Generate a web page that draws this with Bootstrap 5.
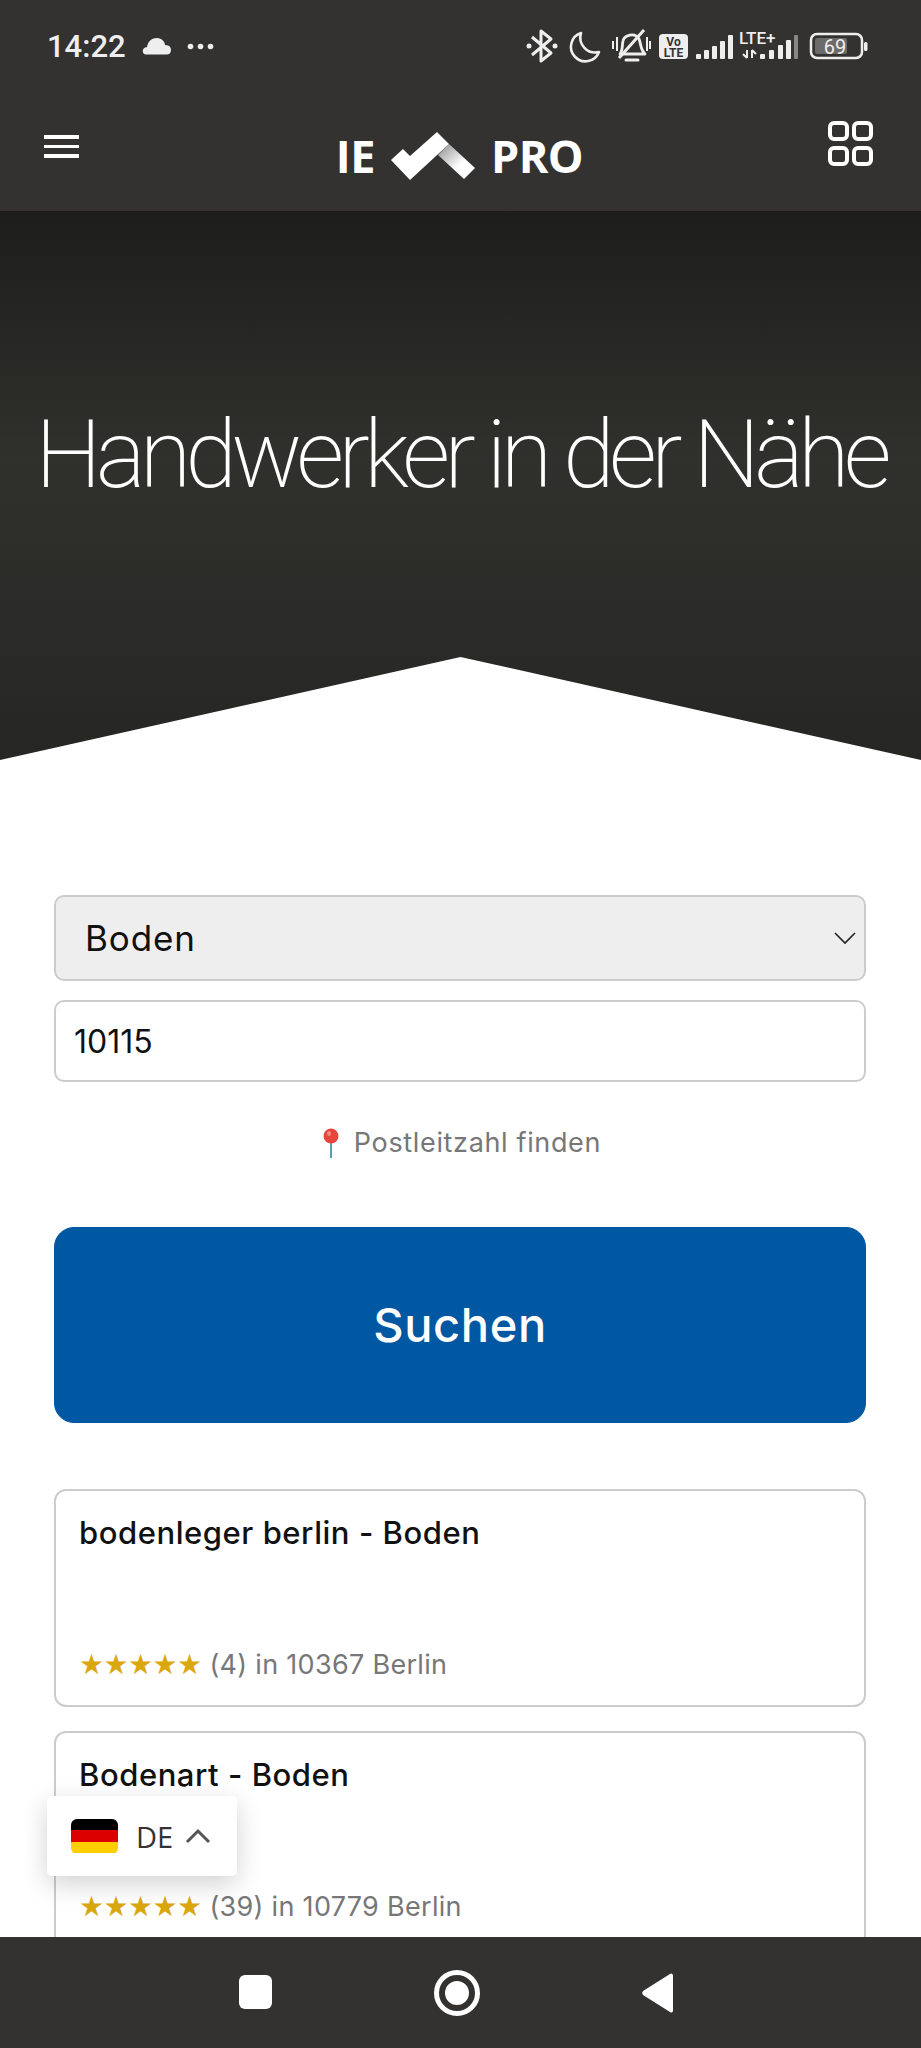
<!DOCTYPE html>
<html lang="de">
<head>
    <meta charset="UTF-8">
    <meta name="viewport" content="width=device-width, initial-scale=1.0">
    <title>Handwerker in der Nähe</title>
    <link href="https://cdn.jsdelivr.net/npm/bootstrap@5.3.3/dist/css/bootstrap.min.css" rel="stylesheet">
    <script src="https://cdn.jsdelivr.net/npm/bootstrap@5.3.3/dist/js/bootstrap.bundle.min.js"></script>
    <style>
        body { font-family: "Inter", "Noto Sans", sans-serif; background: #fff; }
        .phone { width: 921px; height: 2048px; overflow: hidden; position: relative; }

        /* top bars */
        .top-bar { background: #333231; height: 211px; }
        .status-row { height: 92px; padding: 0 53px 0 47px; color: #eee; }
        .clock { font: 500 31px/1 "Roboto", sans-serif; margin-right: 16px; }
        .nav-row { height: 119px; padding: 0 48px 0 44px; }
        .logo-wrap { margin: 8px 0 0 12px; }
        .logo-text { font: 700 45px/1 "Open Sans", sans-serif; letter-spacing: -.5px; color: #fff; }
        .menu-btn { width: 35px; margin-top: 43px; }
        .menu-btn span { display: block; height: 3.5px; background: #fff; margin-bottom: 6px; }

        /* hero */
        .hero-band {
            height: 549px;
            background: linear-gradient(180deg, #1d1d1c 0%, #30302c 45%, #262625 100%);
            clip-path: polygon(0 0, 100% 0, 100% 100%, 50% 446px, 0 100%);
            padding-top: 188px;
        }
        .hero-band h1 {
            font: 200 94px/1.2 "Roboto", sans-serif;
            letter-spacing: -5.9px;
            color: #fff;
            white-space: nowrap;
        }

        /* search form */
        .search-area { padding: 135px 55px 0 54px; flex: 1 1 auto; min-height: 0; overflow: hidden; }
        .search-area .form-select {
            height: 86px; font-size: 35px; letter-spacing: .9px; padding-left: 29px; color: #111;
            background-color: #eee; border: 2px solid #ccc; border-radius: 10px;
            background-image: url("data:image/svg+xml,%3csvg xmlns='http://www.w3.org/2000/svg' viewBox='0 0 22 14'%3e%3cpath fill='none' stroke='%23222' stroke-width='1.6' d='M1 2l10 10L21 2'/%3e%3c/svg%3e");
            background-size: 22px 14px; background-position: right 8px center;
        }
        .search-area .form-control {
            height: 82px; font-size: 32px; padding-left: 18px; color: #111;
            border: 2px solid #ccc; border-radius: 10px; margin-top: 19px;
        }
        .plz-link { font-size: 27px; letter-spacing: .65px; color: #777; margin-top: 42px; line-height: 38px; }
        .plz-link span { margin-left: 3px; }
        .search-btn {
            height: 196px; width: 100%; margin-top: 65px; font-size: 47px; letter-spacing: .6px; font-weight: 500;
            background: #0058a3; border-color: #0058a3; border-radius: 20px; color: #fff;
        }
        .result-box { height: 218px; border: 2px solid #ccc; border-radius: 12px; margin-bottom: 24px; padding: 22px 23px 0; }
        .first-box { margin-top: 66px; }
        .result-title { font-size: 31px; letter-spacing: .55px; line-height: 40px; font-weight: 500; color: #111; }
        .result-meta { font-size: 27px; letter-spacing: .3px; line-height: 36px; color: #777; margin-top: 94px; }
        .gold-stars { color: #dba70f; font-family: "DejaVu Sans", sans-serif; font-size: 28px; letter-spacing: -.6px; }

        /* language switcher */
        .lang-box {
            position: absolute; left: 47px; top: 1796px; width: 190px; height: 80px;
            background: #fff; border-radius: 5px; box-shadow: 0 8px 26px rgba(0,0,0,.18);
            padding-left: 24px;
        }
        .lang-code { font: 400 29px/1 "Open Sans", sans-serif; color: #333; margin: 0 12px 0 18px; }
        .flag { width: 47px; height: 35px; border-radius: 6px; overflow: hidden; }
        .flag i { display: block; height: 33.34%; }

        /* android nav */
        .bottom-bar { height: 111px; background: #333231; flex: 0 0 auto; }
    </style>
</head>
<body>
<div class="phone d-flex flex-column">

    <div class="top-bar flex-shrink-0">
        <div class="status-row d-flex align-items-center">
            <span class="clock">14:22</span>
            <svg width="29" height="18" viewBox="0 0 29 18"><path d="M4 17.500C0 17.500-1 11 5 10c1-6 5-9 10-9s8 4 8 7c5 0 6 3 6 5 0 3-2 4.500-4 4.500z" fill="#eee"/></svg>
            <svg class="ms-3" width="27" height="7" viewBox="0 0 27 7"><circle cx="3.500" cy="3.500" r="2.800" fill="#eee"/><circle cx="13.500" cy="3.500" r="2.800" fill="#eee"/><circle cx="23.500" cy="3.500" r="2.800" fill="#eee"/></svg>
            <svg class="ms-auto" width="342" height="40" viewBox="526 26 342 40">
                <!-- bluetooth -->
                <path d="M532 37 551 53 541 61V31l10 8-19 16" fill="none" stroke="#eee" stroke-width="3" stroke-linejoin="round"/>
                <circle cx="529" cy="46" r="2.500" fill="#eee"/><circle cx="555" cy="46" r="2.500" fill="#eee"/>
                <!-- moon -->
                <path d="M581 33a14.500 14.500 0 1 0 18 19 15 15 0 0 1-18-19z" fill="none" stroke="#eee" stroke-width="2.600" stroke-linejoin="round"/>
                <!-- muted bell -->
                <path d="M620 54c3-4 2-9 3-13 1-6 12-9 16-2 2 4 1 10 6 15z" fill="none" stroke="#eee" stroke-width="2.800" stroke-linejoin="round"/>
                <path d="M619 58 644 30" stroke="#eee" stroke-width="3"/>
                <path d="M626 60h12" stroke="#eee" stroke-width="3" stroke-linecap="round"/>
                <path d="M613 41v8M617 37v14M647 37v14M650 41v8" stroke="#eee" stroke-width="2"/>
                <!-- volte -->
                <rect x="659" y="34" width="29" height="25" rx="4" fill="#eee"/>
                <text x="673.500" y="45.500" text-anchor="middle" font-family="Roboto" font-weight="700" font-size="12" fill="#333">Vo</text>
                <text x="673.500" y="57" text-anchor="middle" font-family="Roboto" font-weight="700" font-size="12" fill="#333">LTE</text>
                <!-- signal 1 -->
                <g fill="#eee"><rect x="696" y="54" width="5" height="5" rx="1"/><rect x="704" y="50" width="5" height="9" rx="1"/><rect x="712" y="46" width="5" height="13" rx="1"/><rect x="720" y="41" width="5" height="18" rx="1"/><rect x="728" y="35" width="5" height="24" rx="1"/></g>
                <!-- LTE+ with signal 2 -->
                <text x="739" y="44" font-family="Roboto" font-weight="500" font-size="17" fill="#eee">LTE+</text>
                <path d="M747 50v8M743 54l4 4M752 58v-8M756 54l-4-4" stroke="#eee" stroke-width="2" fill="none"/>
                <g fill="#eee"><rect x="760" y="54" width="5" height="5" rx="1"/><rect x="769" y="50" width="5" height="9" rx="1"/><rect x="778" y="45" width="5" height="14" rx="1"/><rect x="786" y="40" width="5" height="19" rx="1"/><rect x="794" y="35" width="4" height="24" rx="1" opacity=".45"/></g>
                <!-- battery -->
                <rect x="811" y="34" width="51" height="24" rx="6" fill="none" stroke="#eee" stroke-width="2.500"/>
                <rect x="815" y="38" width="32" height="16" rx="2" fill="#6b6b6a"/>
                <rect x="864" y="42" width="3.500" height="9" rx="1.500" fill="#eee"/>
                <text x="835" y="53.500" text-anchor="middle" font-family="Roboto" font-size="20" fill="#eee">69</text>
            </svg>
        </div>
        <div class="nav-row d-flex align-items-center justify-content-between position-relative">
            <div class="menu-btn align-self-start"><span></span><span></span><span></span></div>
            <div class="d-flex align-items-center gap-3 logo-wrap">
                <span class="logo-text">IE</span>
                <svg width="84" height="48" viewBox="393 127 84 48">
                    <defs><linearGradient id="wing" x1="0" y1="0" x2="1" y2="1"><stop offset="0" stop-color="#8a8a8a"/><stop offset=".6" stop-color="#fff"/></linearGradient></defs>
                    <path d="M451 139 477 163 466 174 440 150z" fill="url(#wing)"/>
                    <path d="M393 155 405 144 412 151 439 127 451 139 412 175z" fill="#fff"/>
                </svg>
                <span class="logo-text">PRO</span>
            </div>
            <svg class="align-self-start" style="margin-top:29px" width="45" height="45" viewBox="0 0 45 45"><g fill="none" stroke="#fff" stroke-width="4"><rect x="2" y="2" width="17" height="16" rx="4"/><rect x="26" y="2" width="17" height="16" rx="4"/><rect x="2" y="27" width="17" height="16" rx="4"/><rect x="26" y="27" width="17" height="16" rx="4"/></g></svg>
        </div>
    </div>

    <div class="hero-band flex-shrink-0 text-center">
        <h1 class="m-0">Handwerker in der Nähe</h1>
    </div>

    <div class="search-area">
        <form>
            <select class="form-select">
                <option>Boden</option>
            </select>
            <input type="text" class="form-control" value="10115">
            <div class="plz-link d-flex justify-content-center align-items-center gap-2">
                <svg width="24" height="30" viewBox="0 0 24 30"><path d="M12 14v16" stroke="#5d9bb0" stroke-width="2"/><circle cx="12" cy="8" r="7.500" fill="#e8453c"/><ellipse cx="10" cy="5.500" rx="2" ry="2.500" fill="#f58a80"/></svg>
                <span>Postleitzahl finden</span>
            </div>
            <button type="button" class="btn search-btn">Suchen</button>
        </form>
        <div class="result-box first-box">
            <div class="result-title">bodenleger berlin - Boden</div>
            <div class="result-meta"><span class="gold-stars">★★★★★</span> (4) in 10367 Berlin</div>
        </div>
        <div class="result-box">
            <div class="result-title">Bodenart - Boden</div>
            <div class="result-meta"><span class="gold-stars">★★★★★</span> (39) in 10779 Berlin</div>
        </div>
    </div>

    <div class="bottom-bar d-flex align-items-center">
        <svg width="921" height="111" viewBox="0 1937 921 111">
            <rect x="239" y="1975" width="33" height="34" rx="6" fill="#fff"/>
            <circle cx="457" cy="1993" r="20.500" fill="none" stroke="#fff" stroke-width="5"/>
            <circle cx="457" cy="1993" r="12" fill="#fff"/>
            <path d="M673 1975v36a2 2 0 0 1-3 1l-27-17a3 3 0 0 1 0-4l27-17a2 2 0 0 1 3 1z" fill="#fff"/>
        </svg>
    </div>

    <div class="lang-box d-flex align-items-center">
        <div class="flag flex-shrink-0"><i class="bg-black"></i><i style="background:#dd0000"></i><i style="background:#ffce00"></i></div>
        <span class="lang-code">DE</span>
        <svg width="26" height="16" viewBox="0 0 26 16"><path d="M2 14 13 3l11 11" fill="none" stroke="#555" stroke-width="3"/></svg>
    </div>
</div>
</body>
</html>
